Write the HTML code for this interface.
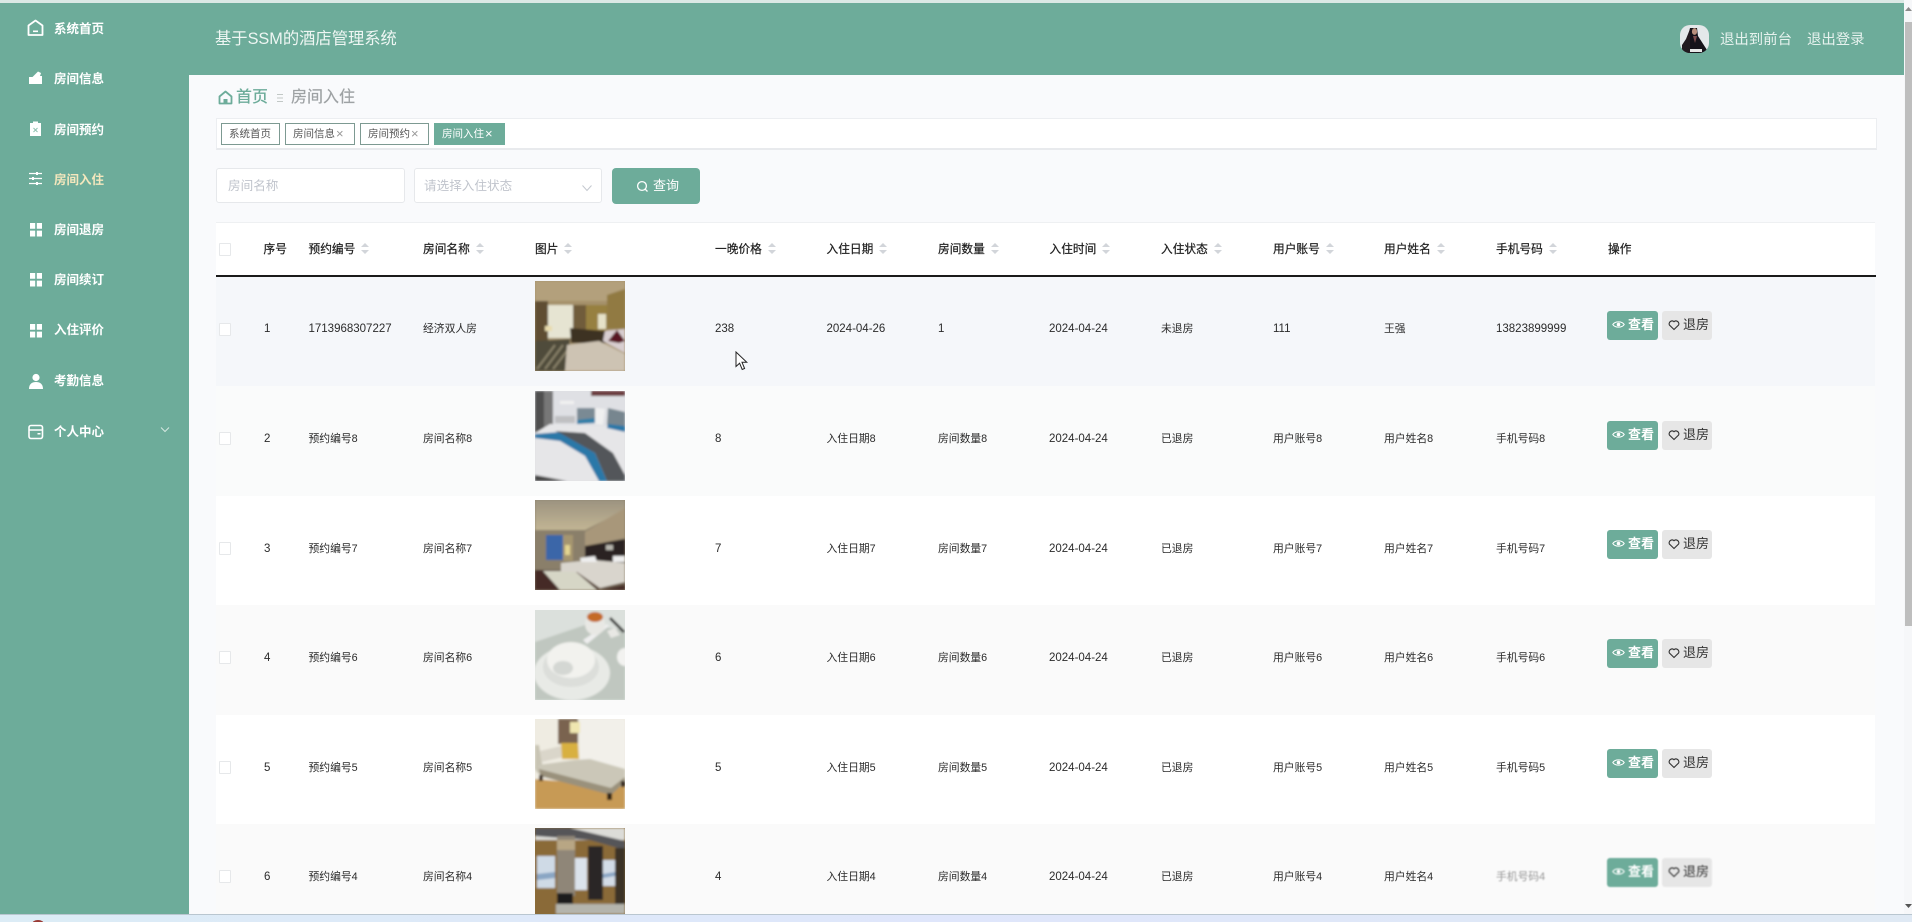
<!DOCTYPE html>
<html lang="zh-CN">
<head>
<meta charset="utf-8">
<title>房间入住</title>
<style>
*{box-sizing:border-box;margin:0;padding:0}
html,body{width:1912px;height:922px;overflow:hidden;background:#f9fafc}
body{position:relative;font-family:"Liberation Sans","Noto Sans CJK SC",sans-serif;color:#333;filter:blur(.3px)}
.top{position:absolute;left:0;top:0;width:1904px;height:3px;background:#dbe9e5}
.header{position:absolute;left:0;top:3px;width:1904px;height:72px;background:#6dac9a}
.side{position:absolute;left:0;top:3px;width:189px;height:911px;background:#6dac9a}
.title{position:absolute;left:215px;top:27px;font-size:16.3px;line-height:24px;color:#eef6f3;white-space:nowrap}
.hr{position:absolute;top:29px;font-size:14.4px;line-height:22px;color:#e6f2ee;white-space:nowrap}
.avatar{position:absolute;left:1680px;top:25px;width:29px;height:28px;border-radius:10px;overflow:hidden}
.mi{position:absolute;left:54px;font-size:12.5px;line-height:18px;font-weight:700;color:#fff;white-space:nowrap}
.ic{position:absolute;left:27px}
.crumb{position:absolute;top:86px;font-size:16px;line-height:24px;white-space:nowrap}
.tags{position:absolute;left:216px;top:118px;width:1661px;height:32px;background:#fff;border:1px solid #eceef1;border-bottom:2px solid #e8eaed}
.tag{position:absolute;top:123px;height:22px;line-height:21px;font-size:10.5px;border:1px solid #7d9a92;background:#fff;color:#555;padding-left:7px;white-space:nowrap}
.tag b{font-weight:400;color:#999;font-size:13px;margin-left:1px;line-height:12px;vertical-align:-1px}
.inp{position:absolute;top:168px;height:35px;background:#fff;border:1px solid #e6e8eb;border-radius:3px;line-height:35px;font-size:12.6px;color:#c0c4cc;white-space:nowrap}
.btn{position:absolute;left:612px;top:168px;width:88px;height:36px;border-radius:4px;background:#6dac9a;color:#fff;font-size:13px;line-height:36px;padding-left:41px}
.thead{position:absolute;left:216px;top:222px;width:1659px;height:53px;background:#fff;border-top:1px solid #eef0f2}
.line{position:absolute;left:216px;top:275px;width:1660px;height:1.5px;background:#1a1a1a}
.th{position:absolute;top:240.5px;font-size:11.7px;line-height:17px;color:#1c1c1c;white-space:nowrap;-webkit-text-stroke:.2px #1c1c1c}
.car{display:inline-block;position:relative;width:8px;height:14px;margin-left:6px;vertical-align:-3px}
.car:before,.car:after{content:"";position:absolute;left:0;border-left:4px solid transparent;border-right:4px solid transparent}
.car:before{top:1px;border-bottom:4px solid #d2d5da}
.car:after{top:8px;border-top:4px solid #d2d5da}
.cb{position:absolute;left:219px;width:12px;height:13px;border:1px solid #e6e8ea;background:#fff;border-radius:1px}
.row{position:absolute;left:216px;width:1659px;height:109.5px}
.td{position:absolute;top:44px;line-height:17px;font-size:10.8px;color:#2b2b2b;white-space:nowrap}
.row+.row .td{top:45px}
.n{font-size:11.5px}
.pic{position:absolute;left:535px;width:90px;height:90px;overflow:hidden;display:block}
.b1,.b2{position:absolute;width:51px;height:29px;border-radius:3px;font-size:13px;line-height:28px;white-space:nowrap}
.b1{left:1607px;background:#6dac9a;color:#fff;font-weight:700;padding-left:21px}
.b2{left:1662px;width:50px;background:#e6e6e6;color:#333;padding-left:21px}
.b1 svg,.b2 svg{position:absolute;top:8px}
.b1 svg{left:5px}.b2 svg{left:6px}
.sb{position:absolute;left:1904px;top:0;width:8px;height:914px;background:#f6f7f9}
.th2{position:absolute;left:1905px;top:22px;width:7px;height:604px;background:#bebebe}
.bot{position:absolute;left:0;top:914px;width:1912px;height:8px;background:linear-gradient(90deg,#dcecf6,#dfe6fb 50%,#dfe9f4);border-top:1px solid #b9c6d0}
.blur{filter:blur(.8px)}
</style>
</head>
<body>
<div class="top"></div>
<div class="header"></div>
<div class="side"></div>

<svg class="ic" style="top:19px" width="17" height="18" viewBox="0 0 17 18"><path d="M8.5 1.5 15.5 6.5V16H1.5V6.5Z" fill="none" stroke="#fff" stroke-width="1.8" stroke-linejoin="round"/><rect x="6" y="11.5" width="5" height="1.6" fill="#fff"/></svg>
<div class="mi" style="top:20px">系统首页</div>
<svg class="ic" style="top:70px" width="17" height="16" viewBox="0 0 17 16"><path d="M2 7H5.5L11 1.5 14 3 13 6H15V14H2Z" fill="#fff"/></svg>
<div class="mi" style="top:70px">房间信息</div>
<svg class="ic" style="top:120px" width="17" height="17" viewBox="0 0 17 17"><path d="M3 3H6V1.5H11V3H14V16H3Z" fill="#fff"/><path d="M6.5 8 10.5 12M10.5 8 6.5 12" stroke="#8fc0b0" stroke-width="1"/></svg>
<div class="mi" style="top:121px">房间预约</div>
<svg class="ic" style="top:171px" width="17" height="15" viewBox="0 0 17 15"><path d="M2 2.5H15M2 7.5H15M2 12.5H15" stroke="#fff" stroke-width="1.2"/><rect x="9" y="1" width="2" height="3" fill="#fff"/><rect x="5" y="6" width="2" height="3" fill="#fff"/><rect x="9" y="11" width="2" height="3" fill="#fff"/></svg>
<div class="mi" style="top:171px;color:#f4e7bd">房间入住</div>
<svg class="ic" style="top:222px" width="17" height="16" viewBox="0 0 17 16"><path d="M3 1H8.2V6.8H3ZM9.8 1H15V6.8H9.8ZM3 8.6H8.2V14.5H3ZM9.8 8.6H15V14.5H9.8Z" fill="#fff"/></svg>
<div class="mi" style="top:221px">房间退房</div>
<svg class="ic" style="top:272px" width="17" height="16" viewBox="0 0 17 16"><path d="M3 1H8.2V6.8H3ZM9.8 1H15V6.8H9.8ZM3 8.6H8.2V14.5H3ZM9.8 8.6H15V14.5H9.8Z" fill="#fff"/></svg>
<div class="mi" style="top:271px">房间续订</div>
<svg class="ic" style="top:323px" width="17" height="16" viewBox="0 0 17 16"><path d="M3 1H8.2V6.8H3ZM9.8 1H15V6.8H9.8ZM3 8.6H8.2V14.5H3ZM9.8 8.6H15V14.5H9.8Z" fill="#fff"/></svg>
<div class="mi" style="top:321px">入住评价</div>
<svg class="ic" style="top:373px" width="17" height="17" viewBox="0 0 17 17"><circle cx="9" cy="4.5" r="3.6" fill="#fff"/><path d="M2 16C2 11 5 9 9 9S16 11 16 16Z" fill="#fff"/></svg>
<div class="mi" style="top:372px">考勤信息</div>
<svg class="ic" style="top:424px" width="17" height="16" viewBox="0 0 17 16"><rect x="2" y="1.5" width="13.5" height="13" rx="2" fill="none" stroke="#fff" stroke-width="1.6"/><path d="M2 6H15.5" stroke="#fff" stroke-width="1.5"/><rect x="10.5" y="9" width="3" height="1.5" fill="#fff"/></svg>
<div class="mi" style="top:423px">个人中心</div>
<svg style="position:absolute;left:160px;top:426px" width="10" height="7" viewBox="0 0 10 7"><path d="M1 1.5 5 5.5 9 1.5" fill="none" stroke="#d5e8e1" stroke-width="1"/></svg>

<div class="title">基于SSM的酒店管理系统</div>
<div class="avatar"><svg width="29" height="28" viewBox="0 0 29 28"><rect width="29" height="28" fill="#e4e8ea"/><path d="M10 3H17L18 11 27 25V28H1V25L8 12Z" fill="#16131a"/><path d="M2 20 6 14 10 4V28H2Z" fill="#221a20"/><ellipse cx="14.5" cy="6.5" rx="2.6" ry="3.4" fill="#b98f7c"/><path d="M13 11 15 18 17 11Z" fill="#7c4c4c"/><rect x="10" y="24" width="12" height="3" fill="#e8e8e8"/></svg></div>
<div class="hr" style="left:1720px">退出到前台</div>
<div class="hr" style="left:1807px">退出登录</div>

<svg style="position:absolute;left:218px;top:90px" width="15" height="15" viewBox="0 0 15 15"><path d="M7.5 1.5 13.5 6.5V13.5H1.5V6.5Z" fill="none" stroke="#6dac9a" stroke-width="1.8" stroke-linejoin="round"/><rect x="5.5" y="9" width="4" height="4.5" fill="#6dac9a"/></svg>
<div class="crumb" style="left:236px;color:#6dac9a;font-weight:500">首页</div>
<svg style="position:absolute;left:277px;top:93px" width="6" height="10" viewBox="0 0 6 10"><path d="M0 1.5H6M0 5H6M0 8.5H6" stroke="#c2c8c6" stroke-width="1"/></svg>
<div class="crumb" style="left:291px;color:#9ea2a4;-webkit-text-stroke:.2px #9ea2a4">房间入住</div>

<div class="tags"></div>
<div class="tag" style="left:221px;width:59px">系统首页</div>
<div class="tag" style="left:285px;width:70px">房间信息<b>×</b></div>
<div class="tag" style="left:360px;width:69px">房间预约<b>×</b></div>
<div class="tag" style="left:434px;width:71px;background:#6dac9a;border-color:#6dac9a;color:#fff">房间入住<b style="color:#fff">×</b></div>

<div class="inp" style="left:216px;width:189px;padding-left:11px">房间名称</div>
<div class="inp" style="left:414px;width:188px;padding-left:9px">请选择入住状态</div>
<svg style="position:absolute;left:581px;top:184px" width="12" height="8" viewBox="0 0 12 8"><path d="M1.5 1.5 6 6.5 10.5 1.5" fill="none" stroke="#c4c8cf" stroke-width="1"/></svg>
<div class="btn">查询</div>
<svg style="position:absolute;left:636px;top:180px" width="13" height="13" viewBox="0 0 13 13"><circle cx="6" cy="6" r="4.4" fill="none" stroke="#fff" stroke-width="1.3"/><path d="M9.2 9.2 11.5 11.5" stroke="#fff" stroke-width="1.3"/></svg>

<div class="thead"></div>
<div class="cb" style="top:243px"></div>
<div class="th" style="left:263.5px">序号</div>
<div class="th" style="left:308.5px">预约编号<span class="car"></span></div>
<div class="th" style="left:423px">房间名称<span class="car"></span></div>
<div class="th" style="left:535px">图片<span class="car"></span></div>
<div class="th" style="left:715px">一晚价格<span class="car"></span></div>
<div class="th" style="left:826.5px">入住日期<span class="car"></span></div>
<div class="th" style="left:938px">房间数量<span class="car"></span></div>
<div class="th" style="left:1049.5px">入住时间<span class="car"></span></div>
<div class="th" style="left:1161px">入住状态<span class="car"></span></div>
<div class="th" style="left:1273px">用户账号<span class="car"></span></div>
<div class="th" style="left:1384px">用户姓名<span class="car"></span></div>
<div class="th" style="left:1496px">手机号码<span class="car"></span></div>
<div class="th" style="left:1608px">操作</div>
<div class="line"></div>

<div class="row" style="top:276.5px;background:#f5f7fa">
<span class="td n" style="left:48px">1</span><span class="td n" style="left:92.5px">1713968307227</span><span class="td" style="left:207px">经济双人房</span><span class="td n" style="left:499px">238</span><span class="td n" style="left:610.5px">2024-04-26</span><span class="td n" style="left:722px">1</span><span class="td n" style="left:833px">2024-04-24</span><span class="td" style="left:945px">未退房</span><span class="td n" style="left:1057px">111</span><span class="td" style="left:1168px">王强</span><span class="td n" style="left:1280px">13823899999</span>
</div>
<div class="row" style="top:386px;background:#fafbfb">
<span class="td n" style="left:48px">2</span><span class="td" style="left:92.5px">预约编号8</span><span class="td" style="left:207px">房间名称8</span><span class="td n" style="left:499px">8</span><span class="td" style="left:610.5px">入住日期8</span><span class="td" style="left:722px">房间数量8</span><span class="td n" style="left:833px">2024-04-24</span><span class="td" style="left:945px">已退房</span><span class="td" style="left:1057px">用户账号8</span><span class="td" style="left:1168px">用户姓名8</span><span class="td" style="left:1280px">手机号码8</span>
</div>
<div class="row" style="top:495.5px;background:#fff">
<span class="td n" style="left:48px">3</span><span class="td" style="left:92.5px">预约编号7</span><span class="td" style="left:207px">房间名称7</span><span class="td n" style="left:499px">7</span><span class="td" style="left:610.5px">入住日期7</span><span class="td" style="left:722px">房间数量7</span><span class="td n" style="left:833px">2024-04-24</span><span class="td" style="left:945px">已退房</span><span class="td" style="left:1057px">用户账号7</span><span class="td" style="left:1168px">用户姓名7</span><span class="td" style="left:1280px">手机号码7</span>
</div>
<div class="row" style="top:605px;background:#fafafa">
<span class="td n" style="left:48px">4</span><span class="td" style="left:92.5px">预约编号6</span><span class="td" style="left:207px">房间名称6</span><span class="td n" style="left:499px">6</span><span class="td" style="left:610.5px">入住日期6</span><span class="td" style="left:722px">房间数量6</span><span class="td n" style="left:833px">2024-04-24</span><span class="td" style="left:945px">已退房</span><span class="td" style="left:1057px">用户账号6</span><span class="td" style="left:1168px">用户姓名6</span><span class="td" style="left:1280px">手机号码6</span>
</div>
<div class="row" style="top:714.5px;background:#fff">
<span class="td n" style="left:48px">5</span><span class="td" style="left:92.5px">预约编号5</span><span class="td" style="left:207px">房间名称5</span><span class="td n" style="left:499px">5</span><span class="td" style="left:610.5px">入住日期5</span><span class="td" style="left:722px">房间数量5</span><span class="td n" style="left:833px">2024-04-24</span><span class="td" style="left:945px">已退房</span><span class="td" style="left:1057px">用户账号5</span><span class="td" style="left:1168px">用户姓名5</span><span class="td" style="left:1280px">手机号码5</span>
</div>
<div class="row" style="top:824px;height:90px;background:#fafafa">
<span class="td n" style="left:48px">6</span><span class="td" style="left:92.5px">预约编号4</span><span class="td" style="left:207px">房间名称4</span><span class="td n" style="left:499px">4</span><span class="td" style="left:610.5px">入住日期4</span><span class="td" style="left:722px">房间数量4</span><span class="td n" style="left:833px">2024-04-24</span><span class="td" style="left:945px">已退房</span><span class="td" style="left:1057px">用户账号4</span><span class="td" style="left:1168px">用户姓名4</span><span class="td blur" style="left:1280px;color:#999">手机号码4</span>
</div>

<div class="cb" style="top:323px"></div><div class="cb" style="top:432px"></div><div class="cb" style="top:542px"></div><div class="cb" style="top:651px"></div><div class="cb" style="top:761px"></div><div class="cb" style="top:870px"></div>

<svg class="pic" style="top:281px" viewBox="0 0 90 90"><defs><filter id="f" x="-5%" y="-5%" width="110%" height="110%"><feGaussianBlur stdDeviation="1.1"/></filter></defs><rect width="90" height="90" fill="#a5916b"/><g filter="url(#f)"><rect width="90" height="90" fill="#a5916b"/><rect width="90" height="20" fill="#b3a07c"/><path d="M72 14 90 8V48H72Z" fill="#917a42"/><rect y="20" width="13" height="45" fill="#5e4d30"/><rect x="13" y="24" width="25" height="33" fill="#e6e4d2"/><rect x="38" y="24" width="13" height="33" fill="#6f5b3a"/><rect x="51" y="24" width="21" height="33" fill="#97803f"/><rect x="63" y="33" width="8" height="15" fill="#e6e2c8"/><path d="M10 45H17V50H10Z" fill="#e8dcae"/><path d="M35 47 70 50 72 62 36 62Z" fill="#3d3120"/><path d="M70 50 90 48V72L68 60Z" fill="#d8ced0"/><path d="M73 60 82 49 90 60 84 62Z" fill="#581420"/><path d="M0 60 35 58 32 90H0Z" fill="#4f4b3b"/><path d="M2 88 20 64M10 88 28 64M18 88 32 70" stroke="#8a826b" stroke-width="2"/><path d="M32 64 64 60 90 73V90H30Z" fill="#cdc3b3"/></g></svg>
<svg class="pic" style="top:391px" viewBox="0 0 90 90"><rect width="90" height="90" fill="#dfe0e4"/><g filter="url(#f)"><rect width="90" height="90" fill="#dfe0e4"/><rect width="9" height="42" fill="#4f4f4f"/><rect x="9" width="9" height="40" fill="#777"/><rect x="56" width="34" height="5" fill="#6b3a3c"/><rect x="25" y="10" width="14" height="3" fill="#f2f2f2"/><rect x="20" y="25" width="20" height="7" fill="#bfc0c2"/><path d="M0 42 15 33 90 36V90H0Z" fill="#e6e6e8"/><path d="M42 17H60V31L42 33Z" fill="#7a8a94"/><path d="M42 29 60 27V32L42 33Z" fill="#2f7fa8"/><path d="M60 17 70 18 68 34 60 33Z" fill="#f0f0f0"/><path d="M73 17 90 21V41L72 34Z" fill="#77868f"/><path d="M73 33 90 35V41L72 37Z" fill="#2c78a8"/><path d="M0 43 25 41 60 62 72 90H64L50 65 25 50 0 47Z" fill="#2a78a8"/><path d="M20 40 50 42 78 62 90 84V90H72L60 62 25 42Z" fill="#52565a"/><path d="M0 84 32 90H0Z" fill="#444"/></g></svg>
<svg class="pic" style="top:500px" viewBox="0 0 90 90"><defs><linearGradient id="c" x1="0" y1="0" x2="0" y2="1"><stop offset="0" stop-color="#9c9380"/><stop offset="1" stop-color="#c2b594"/></linearGradient></defs><rect width="90" height="90" fill="#91856f"/><g filter="url(#f)"><rect width="90" height="90" fill="#91856f"/><path d="M0 0H90V10L50 30H0Z" fill="url(#c)"/><path d="M90 8 50 32 50 46 90 38Z" fill="#a8977a"/><rect y="30" width="50" height="40" fill="#8a7f6a"/><rect x="11" y="35" width="17" height="25" fill="#3a66a8"/><rect x="28" y="35" width="10" height="26" fill="#a5956f"/><rect x="30" y="45" width="5" height="10" fill="#e3d491"/><path d="M50 46 90 39V66L50 60Z" fill="#2c2420"/><path d="M71 45H78V50H71Z" fill="#b7b6ae"/><path d="M0 70H90V90H0Z" fill="#442a26"/><path d="M8 71H40L62 90H25Z" fill="#d6d6c6"/><path d="M26 63 58 60 90 63V83L65 90 42 72 26 72Z" fill="#d9d5cd"/><path d="M42 72 65 88 90 82V85L65 90Z" fill="#6a5a4a"/><path d="M45 58 60 56 62 62 46 62ZM78 56 90 56V62H78Z" fill="#eee"/></g></svg>
<svg class="pic" style="top:610px" viewBox="0 0 90 90"><rect width="90" height="90" fill="#dbe0dc"/><g filter="url(#f)"><rect width="90" height="90" fill="#dbe0dc"/><path d="M0 32 50 15 90 20V90H0Z" fill="#c0c7c0"/><ellipse cx="37" cy="63" rx="38" ry="27" fill="#e8eae6"/><ellipse cx="36" cy="57" rx="28" ry="20" fill="#dcdeda"/><ellipse cx="36" cy="50" rx="24" ry="18" fill="#f2f2ee"/><ellipse cx="28" cy="58" rx="10" ry="7" fill="#d4d7d3"/><path d="M48 30 72 14 74 16 52 34Z" fill="#eee"/><ellipse cx="60" cy="14" rx="10" ry="11" fill="#e8e8e4"/><ellipse cx="60" cy="7" rx="8" ry="5" fill="#c46a28"/><path d="M76 7 90 21 88 23 74 9Z" fill="#333"/><path d="M72 21 80 18 85 25 76 28Z" fill="#e8e8e4"/><ellipse cx="90" cy="47" rx="8" ry="9" fill="#f2f2f0"/></g></svg>
<svg class="pic" style="top:719px" viewBox="0 0 90 90"><rect width="90" height="90" fill="#efece2"/><g filter="url(#f)"><rect width="90" height="90" fill="#efece2"/><rect x="23" width="20" height="25" fill="#7a6450"/><rect x="35" y="3" width="10" height="11" fill="#efe6b0"/><rect x="45" width="45" height="50" fill="#f2f0ea"/><path d="M0 60 90 68V90H0Z" fill="#c79a55"/><path d="M0 26H4L8 50 3 55 0 50Z" fill="#c8c4b4"/><path d="M5 32 26 27 28 38 7 43Z" fill="#dad6ca"/><path d="M26 24H43L44 40H27Z" fill="#d8b040"/><path d="M3 46 40 41 55 40 90 50V62L75 75 5 54Z" fill="#cbc7b8"/><path d="M4 50 76 69 90 58V63L76 76 5 57Z" fill="#9a917c"/><rect x="4" y="56" width="4" height="6" fill="#3a2a1c"/><rect x="72" y="74" width="5" height="7" fill="#2e2218"/><rect x="86" y="62" width="4" height="6" fill="#2e2218"/></g></svg>
<svg class="pic" style="top:828px;height:86px" viewBox="0 0 90 86"><rect width="90" height="86" fill="#8a6a38"/><g filter="url(#f)"><rect width="90" height="86" fill="#8a6a38"/><rect width="90" height="12" fill="#dcdcd8"/><path d="M0 0H35L90 13V22L55 12 0 8Z" fill="#555558"/><rect x="22" y="8" width="18" height="60" fill="#8f8678"/><rect x="22" y="12" width="18" height="10" fill="#b8a684"/><rect x="2" y="28" width="18" height="32" fill="#cfdae6"/><path d="M2 46 20 44V50L2 52Z" fill="#8aa6c4"/><rect x="40" y="30" width="12" height="32" fill="#dbe3eb"/><rect x="68" y="32" width="12" height="26" fill="#d3dce6"/><path d="M68 46 80 44V48L68 50Z" fill="#8aa6c4"/><rect x="53" y="18" width="15" height="54" fill="#2a2826"/><rect x="80" y="20" width="10" height="60" fill="#3a3028"/><rect x="22" y="65" width="16" height="13" fill="#1c1c1c"/><rect y="76" width="90" height="10" fill="#b4b4ac"/><rect y="60" width="21" height="26" fill="#8a6a38"/></g></svg>

<div class="b1" style="top:311px"><svg width="13" height="11" viewBox="0 0 13 11"><path d="M.8 5.5C3 2 10 2 12.2 5.5 10 9 3 9 .8 5.5Z" fill="none" stroke="#fff" stroke-width="1.1"/><circle cx="6.5" cy="5.5" r="1.8" fill="#fff"/></svg>查看</div>
<div class="b2" style="top:311px"><svg width="12" height="12" viewBox="0 0 12 12"><path d="M6 10.5 1.4 6A2.9 2.9 0 0 1 6 2.7 2.9 2.9 0 0 1 10.6 6Z" fill="none" stroke="#333" stroke-width="1.1"/></svg>退房</div>
<div class="b1" style="top:420.5px"><svg width="13" height="11" viewBox="0 0 13 11"><path d="M.8 5.5C3 2 10 2 12.2 5.5 10 9 3 9 .8 5.5Z" fill="none" stroke="#fff" stroke-width="1.1"/><circle cx="6.5" cy="5.5" r="1.8" fill="#fff"/></svg>查看</div>
<div class="b2" style="top:420.5px"><svg width="12" height="12" viewBox="0 0 12 12"><path d="M6 10.5 1.4 6A2.9 2.9 0 0 1 6 2.7 2.9 2.9 0 0 1 10.6 6Z" fill="none" stroke="#333" stroke-width="1.1"/></svg>退房</div>
<div class="b1" style="top:530px"><svg width="13" height="11" viewBox="0 0 13 11"><path d="M.8 5.5C3 2 10 2 12.2 5.5 10 9 3 9 .8 5.5Z" fill="none" stroke="#fff" stroke-width="1.1"/><circle cx="6.5" cy="5.5" r="1.8" fill="#fff"/></svg>查看</div>
<div class="b2" style="top:530px"><svg width="12" height="12" viewBox="0 0 12 12"><path d="M6 10.5 1.4 6A2.9 2.9 0 0 1 6 2.7 2.9 2.9 0 0 1 10.6 6Z" fill="none" stroke="#333" stroke-width="1.1"/></svg>退房</div>
<div class="b1" style="top:639px"><svg width="13" height="11" viewBox="0 0 13 11"><path d="M.8 5.5C3 2 10 2 12.2 5.5 10 9 3 9 .8 5.5Z" fill="none" stroke="#fff" stroke-width="1.1"/><circle cx="6.5" cy="5.5" r="1.8" fill="#fff"/></svg>查看</div>
<div class="b2" style="top:639px"><svg width="12" height="12" viewBox="0 0 12 12"><path d="M6 10.5 1.4 6A2.9 2.9 0 0 1 6 2.7 2.9 2.9 0 0 1 10.6 6Z" fill="none" stroke="#333" stroke-width="1.1"/></svg>退房</div>
<div class="b1" style="top:749px"><svg width="13" height="11" viewBox="0 0 13 11"><path d="M.8 5.5C3 2 10 2 12.2 5.5 10 9 3 9 .8 5.5Z" fill="none" stroke="#fff" stroke-width="1.1"/><circle cx="6.5" cy="5.5" r="1.8" fill="#fff"/></svg>查看</div>
<div class="b2" style="top:749px"><svg width="12" height="12" viewBox="0 0 12 12"><path d="M6 10.5 1.4 6A2.9 2.9 0 0 1 6 2.7 2.9 2.9 0 0 1 10.6 6Z" fill="none" stroke="#333" stroke-width="1.1"/></svg>退房</div>
<div class="b1 blur" style="top:858px"><svg width="13" height="11" viewBox="0 0 13 11"><path d="M.8 5.5C3 2 10 2 12.2 5.5 10 9 3 9 .8 5.5Z" fill="none" stroke="#fff" stroke-width="1.1"/><circle cx="6.5" cy="5.5" r="1.8" fill="#fff"/></svg>查看</div>
<div class="b2 blur" style="top:858px"><svg width="12" height="12" viewBox="0 0 12 12"><path d="M6 10.5 1.4 6A2.9 2.9 0 0 1 6 2.7 2.9 2.9 0 0 1 10.6 6Z" fill="none" stroke="#333" stroke-width="1.1"/></svg>退房</div>

<svg style="position:absolute;left:735px;top:351px" width="13" height="20" viewBox="0 0 13 20"><path d="M1 1V15.5L4.6 12.2 7.2 18.5 9.6 17.5 7 11.3H11.8Z" fill="#fff" stroke="#222" stroke-width="1"/></svg>

<div class="sb"></div>
<div class="th2"></div>
<svg style="position:absolute;left:1905px;top:6px" width="7" height="6" viewBox="0 0 7 6"><path d="M0 5 3.5 1 7 5Z" fill="#8a8a8a"/></svg>
<svg style="position:absolute;left:1905px;top:903px" width="7" height="6" viewBox="0 0 7 6"><path d="M0 1 3.5 5 7 1Z" fill="#555"/></svg>
<div class="bot"></div>
<svg style="position:absolute;left:30px;top:920px" width="16" height="2" viewBox="0 0 16 2"><ellipse cx="8" cy="4" rx="6" ry="4" fill="#9a3a34"/></svg>
</body>
</html>
